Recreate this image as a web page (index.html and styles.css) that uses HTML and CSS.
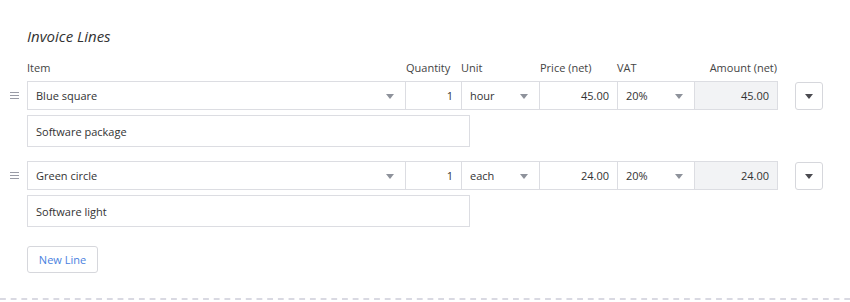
FILE: index.html
```html
<!DOCTYPE html>
<html>
<head>
<meta charset="utf-8">
<link rel="stylesheet" href="styles.css">
</head>
<body>
<div class="panel">
  <h2 class="title">Invoice Lines</h2>
  <div class="head">
    <div class="h-item">Item</div>
    <div class="h-qty">Quantity</div>
    <div class="h-unit">Unit</div>
    <div class="h-price">Price (net)</div>
    <div class="h-vat">VAT</div>
    <div class="h-amount">Amount (net)</div>
  </div>

  <div class="line">
    <div class="fields">
      <span class="handle"><i></i><i></i><i></i></span>
      <div class="cell item select">Blue square<span class="caret"></span></div>
      <div class="cell qty num">1</div>
      <div class="cell unit select">hour<span class="caret"></span></div>
      <div class="cell price num">45.00</div>
      <div class="cell vat select">20%<span class="caret"></span></div>
      <div class="cell amount num">45.00</div>
      <div class="menu-btn"><span class="caret dark"></span></div>
    </div>
    <div class="desc">Software package</div>
  </div>

  <div class="line">
    <div class="fields">
      <span class="handle"><i></i><i></i><i></i></span>
      <div class="cell item select">Green circle<span class="caret"></span></div>
      <div class="cell qty num">1</div>
      <div class="cell unit select">each<span class="caret"></span></div>
      <div class="cell price num">24.00</div>
      <div class="cell vat select">20%<span class="caret"></span></div>
      <div class="cell amount num">24.00</div>
      <div class="menu-btn"><span class="caret dark"></span></div>
    </div>
    <div class="desc">Software light</div>
  </div>

  <button class="new-line">New Line</button>
</div>
<div class="divider"></div>
</body>
</html>
```

FILE: styles.css
```css
html, body {
  margin: 0;
  padding: 0;
  background: #fff;
}
body {
  font-family: "Open Sans", "Noto Sans", sans-serif;
  font-size: 11px;
  color: #333;
  width: 850px;
  height: 302px;
  position: relative;
  overflow: hidden;
}
.panel {
  padding: 26px 0 0 27px;
}
.title {
  margin: 0;
  font-size: 15px;
  font-weight: 400;
  font-style: italic;
  color: #333;
  line-height: 20px;
}
.head {
  display: flex;
  height: 15px;
  line-height: 15px;
  color: #444;
  margin-top: 14px;
  margin-bottom: 6px;
}
.h-item { width: 379px; }
.h-qty { width: 55px; }
.h-unit { width: 79px; }
.h-price { width: 77px; }
.h-vat { width: 77px; }
.h-amount { width: 83px; text-align: right; }

.line {
  margin-bottom: 14px;
}
.fields {
  display: flex;
  position: relative;
  height: 29px;
}
.handle {
  position: absolute;
  left: -17px;
  top: 11px;
  width: 9px;
  display: flex;
  flex-direction: column;
  gap: 2px;
}
.handle i {
  display: block;
  height: 1px;
  background: #9a9ca6;
}
.cell {
  box-sizing: border-box;
  height: 29px;
  border: 1px solid #dcdde2;
  background: #fff;
  display: flex;
  align-items: center;
  padding: 0 8px;
  position: relative;
}
.cell + .cell { margin-left: -1px; }
.item { width: 379px; }
.qty { width: 57px; }
.unit { width: 79px; }
.price { width: 79px; }
.vat { width: 78px; }
.amount { width: 84px; background: #f2f3f5; }
.num { justify-content: flex-end; }
.select .caret {
  position: absolute;
  right: 11px;
  top: 12px;
}
.caret {
  width: 0;
  height: 0;
  border-left: 4px solid transparent;
  border-right: 4px solid transparent;
  border-top: 5px solid #8e929b;
}
.caret.dark { border-top-color: #4a4a50; }
.menu-btn {
  box-sizing: border-box;
  width: 28px;
  height: 28px;
  margin-left: 17px;
  margin-top: 1px;
  border: 1px solid #d6d7dc;
  border-radius: 3px;
  display: flex;
  align-items: center;
  justify-content: center;
}
.desc {
  box-sizing: border-box;
  width: 443px;
  height: 32px;
  margin-top: 5px;
  border: 1px solid #dcdde2;
  display: flex;
  align-items: center;
  padding: 0 8px;
}
.new-line {
  display: block;
  margin-top: 19px;
  box-sizing: border-box;
  width: 71px;
  height: 27px;
  border: 1px solid #d6d7dc;
  border-radius: 3px;
  background: #fff;
  color: #4a7fe0;
  font-family: inherit;
  font-size: 11px;
  padding: 0;
}
.divider {
  position: absolute;
  left: 0;
  right: 0;
  top: 298px;
  height: 2px;
  background-image: linear-gradient(to right, #d9d9e2 0, #d9d9e2 6px, transparent 6px);
  background-size: 10.7px 2px;
  background-repeat: repeat-x;
}
```
